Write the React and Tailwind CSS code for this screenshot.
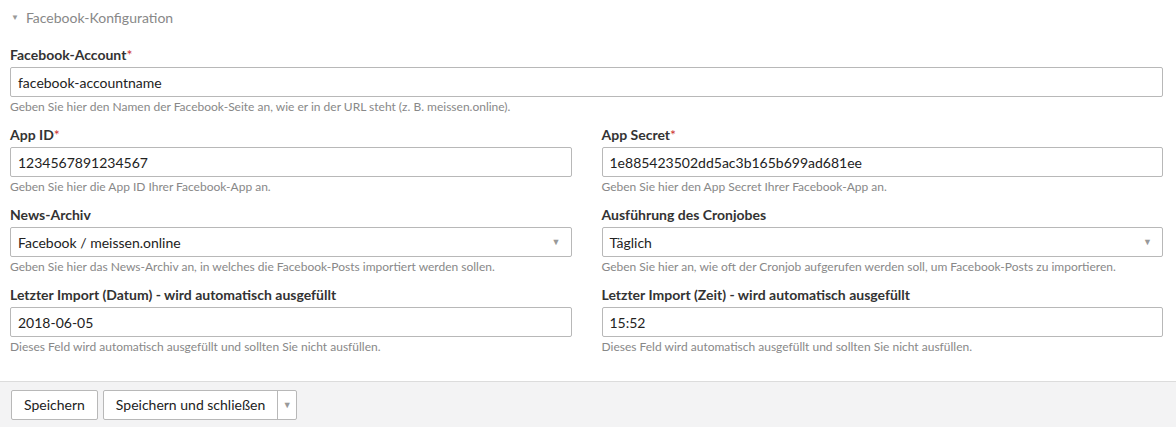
const Label = ({ children, required }) => (
  <label className="block text-[14px] font-bold text-[#333] leading-[18px] mb-[3px]">
    {children}
    {required && <span className="text-[#c33] font-normal">*</span>}
  </label>
);

const Help = ({ children }) => (
  <p className="text-[12px] text-[#888] leading-[15px] mt-[2px]">{children}</p>
);

const Input = ({ value }) => (
  <div className="h-[30px] border border-[#b8b8b8] rounded-[2px] bg-white px-[7px] flex items-center text-[14px] text-[#222]">
    {value}
  </div>
);

const Select = ({ value }) => (
  <div className="h-[30px] border border-[#b8b8b8] rounded-[2px] bg-white pl-[7px] pr-[10px] flex items-center justify-between text-[14px] text-[#222]">
    <span>{value}</span>
    <span className="text-[9px] text-[#999]">▼</span>
  </div>
);

const Field = ({ label, required, help, children }) => (
  <div className="mb-[12px]">
    <Label required={required}>{label}</Label>
    {children}
    <Help>{help}</Help>
  </div>
);

export default function App() {
  return (
    <div className="w-[1176px] h-[427px] bg-white font-['Lato','Liberation_Sans',sans-serif] flex flex-col">
      <div className="pl-[10px] pr-[13px] flex-1">
        <div className="h-[34px] flex items-center text-[14px] text-[#888]">
          <span className="text-[8px] text-[#999] mr-[7px] ml-[1px]">▼</span>
          Facebook-Konfiguration
        </div>
        <div className="pt-[12px]">
          <Field
            label="Facebook-Account"
            required
            help="Geben Sie hier den Namen der Facebook-Seite an, wie er in der URL steht (z. B. meissen.online)."
          >
            <Input value="facebook-accountname" />
          </Field>
          <div className="grid grid-cols-2 gap-x-[30px]">
            <Field label="App ID" required help="Geben Sie hier die App ID Ihrer Facebook-App an.">
              <Input value="1234567891234567" />
            </Field>
            <Field label="App Secret" required help="Geben Sie hier den App Secret Ihrer Facebook-App an.">
              <Input value="1e885423502dd5ac3b165b699ad681ee" />
            </Field>
            <Field
              label="News-Archiv"
              help="Geben Sie hier das News-Archiv an, in welches die Facebook-Posts importiert werden sollen."
            >
              <Select value="Facebook / meissen.online" />
            </Field>
            <Field
              label="Ausführung des Cronjobes"
              help="Geben Sie hier an, wie oft der Cronjob aufgerufen werden soll, um Facebook-Posts zu importieren."
            >
              <Select value="Täglich" />
            </Field>
            <Field
              label="Letzter Import (Datum) - wird automatisch ausgefüllt"
              help="Dieses Feld wird automatisch ausgefüllt und sollten Sie nicht ausfüllen."
            >
              <Input value="2018-06-05" />
            </Field>
            <Field
              label="Letzter Import (Zeit) - wird automatisch ausgefüllt"
              help="Dieses Feld wird automatisch ausgefüllt und sollten Sie nicht ausfüllen."
            >
              <Input value="15:52" />
            </Field>
          </div>
        </div>
      </div>
      <div className="h-[46px] border-t border-[#dcdcdc] bg-[#f3f3f4] pl-[11px] flex items-center gap-[5px]">
        <button className="h-[30px] px-[12px] border border-[#b8b8b8] rounded-[2px] bg-white text-[14px] text-[#222]">
          Speichern
        </button>
        <div className="h-[30px] flex border border-[#b8b8b8] rounded-[2px] bg-white text-[14px] text-[#222]">
          <button className="px-[12px] border-r border-[#b8b8b8]">Speichern und schließen</button>
          <button className="w-[18px] flex items-center justify-center text-[9px] text-[#999]">▼</button>
        </div>
      </div>
    </div>
  );
}
